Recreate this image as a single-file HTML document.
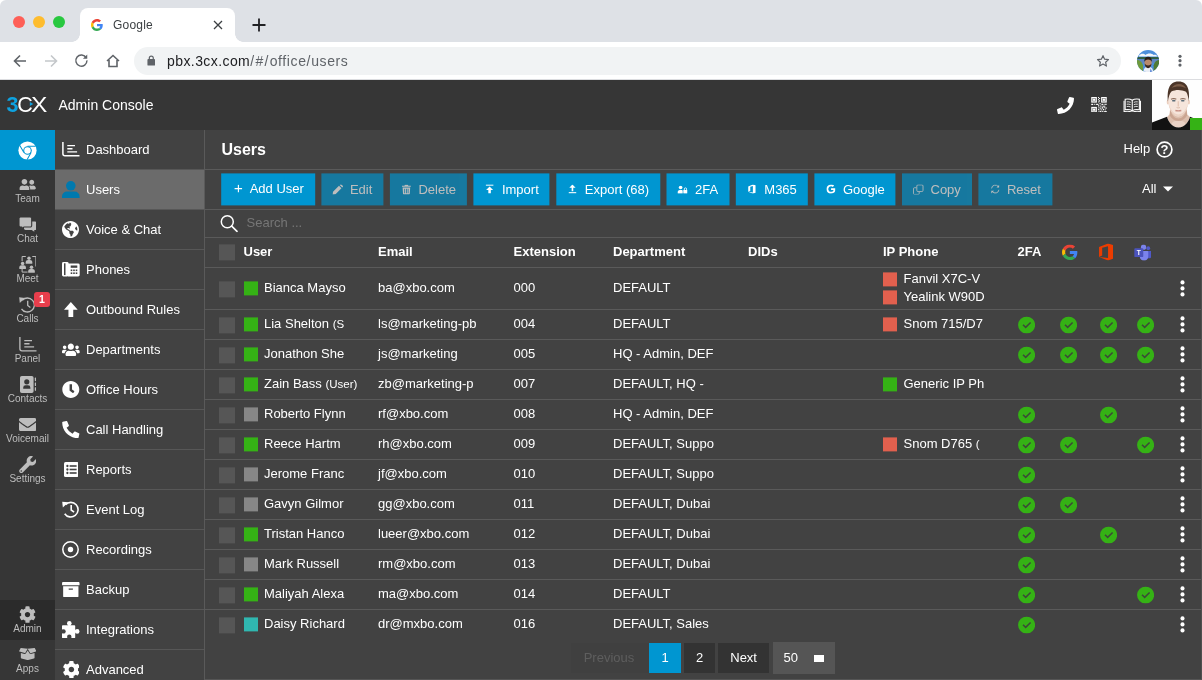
<!DOCTYPE html>
<html lang="en"><head><meta charset="utf-8"><title>Users - 3CX Admin Console</title>
<style>
*{box-sizing:border-box;margin:0;padding:0}
html,body{width:1202px;height:680px;overflow:hidden}
body{font-family:"Liberation Sans",sans-serif;background:#424242;color:#fff;position:relative;font-size:13px;line-height:1}
svg{display:block}
i{font-style:normal}
/* browser chrome */
.tabbar{position:absolute;left:0;top:0;width:1202px;height:42px;background:#dee1e6;border-radius:6px 6px 0 0}
.tabbg{position:absolute;left:0;top:0;width:1202px;height:10px;background:#fff}
.tl{position:absolute;top:15.5px;width:12px;height:12px;border-radius:50%}
.tab{position:absolute;left:80px;top:8px;width:155px;height:34px;background:#fff;border-radius:8px 8px 0 0}
.tab .curveL,.tab .curveR{position:absolute;bottom:0;width:8px;height:8px;background:radial-gradient(circle at 0 0,#dee1e6 7.5px,#fff 8px)}
.tab .curveL{left:-8px}
.tab .curveR{right:-8px;background:radial-gradient(circle at 100% 0,#dee1e6 7.5px,#fff 8px)}
.tabtitle{position:absolute;left:33px;top:11px;font-size:12px;color:#3c4043;letter-spacing:.2px}
.toolbar{position:absolute;left:0;top:42px;width:1202px;height:38px;background:#fff;border-bottom:1px solid #dcdde0}
.toolbar svg,.tabbar svg{position:absolute}
.pill{position:absolute;left:134px;top:5px;width:987px;height:28px;border-radius:14px;background:#f1f3f4}
.url{position:absolute;left:33px;top:7px;font-size:14px;color:#5f6368;letter-spacing:.620px;white-space:nowrap}
.url u{text-decoration:none;letter-spacing:1.300px}
.url b{font-weight:normal;color:#202124;letter-spacing:.42px}
/* app header */
.apphead{position:absolute;left:0;top:80px;width:1202px;height:50px;background:#363636}
.apphead svg{position:absolute}
.apptitle{position:absolute;left:58.5px;top:18px;font-size:14px;color:#fff}
.avatar{position:absolute;left:1152px;top:0;width:50px;height:50px;background:#fff;overflow:hidden}
.presence{position:absolute;right:0;bottom:0;width:12px;height:12px;background:#35b215}
/* sidebar */
.side{position:absolute;left:0;top:130px;width:55px;height:550px;background:#363636}
.sideblue{position:absolute;left:0;top:0;width:55px;height:40px;background:#0096d1}
.sideblue svg{position:absolute;left:18px;top:10.500px}
.sitem{position:absolute;left:0;width:55px;height:40px;color:#bdbdbd;text-align:center}
.sitem.active{background:#2b2b2b}
.sitem svg{position:absolute}
.sitem span{position:absolute;left:0;width:55px;top:23.5px;font-size:10px}
.badge{position:absolute;left:34px;top:2px;width:16px;height:14.5px;border-radius:3px;background:#e83e4c;color:#fff;font-size:10.5px;font-weight:bold;font-style:normal;line-height:15px;text-align:center}
/* menu */
.menu{position:absolute;left:55px;top:130px;width:149px;height:550px;background:#424242}
.mitem{position:relative;height:40px;border-bottom:1px solid #575757}
.mitem.active{background:#6b6b6b}
.mitem svg{position:absolute}
.mitem span{position:absolute;left:31px;top:13px;font-size:13px;color:#fff;white-space:nowrap}
/* main */
.main{position:absolute;left:205px;top:130px;width:997px;height:550px;background:#424242;border-left:0}
.main:before{content:"";position:absolute;left:-1px;top:0;width:1px;height:550px;background:#5a5a5a}
.title{position:absolute;left:16.5px;top:12px;font-size:16px;font-weight:bold}
.help{position:absolute;left:918.5px;top:12px;font-size:13px}
.help svg{position:absolute;left:32.300px;top:-1.500px}
.hl{position:absolute;left:0;width:997px;height:1px;background:#5a5a5a}
.btn{position:absolute;top:43.5px;height:32px;background:#0096d1;color:#fff;font-size:13px;white-space:nowrap}
.btn.dis{opacity:.65}
.btn svg{position:absolute;left:12px;top:10px}
.btn span{position:absolute;left:28.5px;top:9px}
.allsel{position:absolute;left:937px;top:52.5px;font-size:13px}
.caret{position:absolute;left:20.800px;top:4.500px;border:5px solid transparent;border-top-color:#fff;border-bottom:0}
.search{position:absolute;left:0;top:80px;height:27px;width:997px}
.search svg{position:absolute;left:15.100px;top:5px}
.search span{position:absolute;left:41.600px;top:7px;color:#767676;font-size:13px}
.row{position:absolute;left:0;width:997px}
.row .c{position:absolute;top:50%;margin-top:-7px;white-space:nowrap;font-size:13px;line-height:14px}
.row.head .c{font-weight:bold}
.row small{font-size:11.5px}
.cb{position:absolute;left:14.400px;top:50%;margin-top:-7px;width:16px;height:16px;background:#565656}
.row.head .cb{margin-top:-7.500px}
.sq{position:absolute;top:50%;margin-top:-6.200px;width:14px;height:14px}
.sq.g{background:#35b215}.sq.x{background:#878787}.sq.t{background:#30b7b0}.sq.r{background:#e2604e}
.row svg{position:absolute}
.pg{position:absolute;top:513px;height:30px;background:#333;color:#fff;font-size:13px;text-align:center;line-height:30px}
.pg.cur{background:#0096d1}
.pg.prev{background:#404040;color:#5e5e5e;text-indent:-2px}
.pgsz{position:absolute;left:567.5px;top:512px;width:62.75px;height:32px;background:#555}
.pgsz span{position:absolute;left:11px;top:9px;font-size:13px}
.pgsz i{position:absolute;left:41.5px;top:13px;width:10px;height:6.5px;background:#fff}
.redge{position:absolute;left:996px;top:0;width:1px;height:550px;background:#505050}
.logo{position:absolute;left:6.500px;top:13px;font-size:21.500px;letter-spacing:-1.300px;color:#fff;line-height:24px;white-space:nowrap}
.logo b{color:#0ea2e0;font-weight:bold}
.logo .lc,.logo .lx{font-weight:normal}
.logo .lx{position:relative;display:inline-block;transform:scaleX(1.140);transform-origin:0 0;margin-left:-.700px}
.logo .lx i{position:absolute;left:-1.500px;top:9px;border:2.500px solid transparent;border-left:3px solid #0ea2e0;border-right:0}
#app{position:absolute;left:0;top:0;width:1202px;height:680px}
.tabbar,.toolbar,.apphead,.side,.menu,.main{will-change:transform}
.row,.search,.btn,.allsel{transform:translateY(-.6px)}
.bedge{position:absolute;left:0;top:549px;width:997px;height:1px;background:#555}
.btn span{top:10px}
.btn.first span{top:9px}
.btn.dis svg{margin-top:.600px}

</style></head>
<body>
<div id="app">

<div class="tabbg"></div>
<div class="tabbar">
  <span class="tl" style="left:13px;background:#fe5f57"></span>
  <span class="tl" style="left:33px;background:#febc2e"></span>
  <span class="tl" style="left:53px;background:#28c840"></span>
  <div class="tab"><i class="curveL"></i><i class="curveR"></i><svg width="12" height="12" viewBox="0 0 48 48" fill="none" style="position:absolute;left:10.500px;top:11px"><path fill="#EA4335" d="M24 9.500c3.540 0 6.710 1.220 9.210 3.600l6.850-6.850C35.900 2.380 30.470 0 24 0 14.620 0 6.510 5.380 2.560 13.220l7.980 6.190C12.430 13.720 17.740 9.500 24 9.500z"/><path fill="#4285F4" d="M46.980 24.550c0-1.570-.15-3.090-.38-4.550H24v9.020h12.940c-.58 2.960-2.260 5.480-4.780 7.180l7.730 6c4.510-4.180 7.090-10.360 7.090-17.650z"/><path fill="#FBBC05" d="M10.530 28.590c-.48-1.450-.76-2.990-.76-4.590s.27-3.140.76-4.590l-7.980-6.190C.92 16.460 0 20.120 0 24c0 3.880.92 7.540 2.560 10.780l7.970-6.190z"/><path fill="#34A853" d="M24 48c6.480 0 11.930-2.130 15.890-5.810l-7.730-6c-2.150 1.450-4.920 2.300-8.160 2.300-6.260 0-11.570-4.220-13.470-9.910l-7.980 6.190C6.510 42.620 14.620 48 24 48z"/></svg><span class="tabtitle">Google</span><svg width="10" height="10" viewBox="0 0 10 10" fill="currentColor" style="left:133px;top:12px"><path d="M1 1l8 8M9 1l-8 8" stroke="#3c4043" stroke-width="1.3" fill="none"/></svg></div>
  <svg width="14" height="14" viewBox="0 0 14 14" fill="currentColor" style="left:251.500px;top:17.500px"><path d="M7 0.500v13M0.500 7h13" stroke="#202124" stroke-width="1.8" fill="none"/></svg>
</div>
<div class="toolbar">
  <svg width="16" height="16" viewBox="0 0 16 16" fill="currentColor" style="left:11.500px;top:11px"><path d="M14 8H2.500M8 2.500L2.500 8 8 13.500" stroke="#5f6368" stroke-width="1.6" fill="none"/></svg><svg width="16" height="16" viewBox="0 0 16 16" fill="currentColor" style="left:43px;top:11px"><path d="M2 8h11.500M8 2.500L13.500 8 8 13.500" stroke="#c4c7ca" stroke-width="1.600" fill="none"/></svg><svg width="14.8" height="14.8" viewBox="0 0 16 16" fill="currentColor" style="left:74.400px;top:11.400px"><path d="M13.200 5.200A6 6 0 1 0 14 8" stroke="#5f6368" stroke-width="1.600" fill="none"/><path d="M14.300 1.500v4.600H9.700z" fill="#5f6368"/></svg><svg width="16" height="16" viewBox="0 0 16 16" fill="currentColor" style="left:105px;top:11px"><path d="M2 8L8 2.500 14 8M4 7v6.500h8V7" stroke="#5f6368" stroke-width="1.600" fill="none"/></svg>
  <div class="pill"><svg width="8.6" height="10.8" viewBox="0 0 10 12" fill="currentColor" style="position:absolute;left:12.800px;top:8px"><rect x="0.500" y="4.500" width="9" height="7.500" rx="1" fill="#5f6368"/><path d="M2.700 5V3.300a2.300 2.300 0 0 1 4.600 0V5" stroke="#5f6368" stroke-width="1.400" fill="none"/></svg><span class="url"><b>pbx.3cx.com</b><u>/#/</u>office/users</span><svg width="14" height="14" viewBox="0 0 24 24" fill="currentColor" style="position:absolute;left:962px;top:7px"><path d="M12 2.800l2.800 6.100 6.600.7-4.900 4.500 1.400 6.600L12 17.300l-5.900 3.400 1.400-6.600-4.900-4.500 6.600-.7z" stroke="#5f6368" stroke-width="2" fill="none" stroke-linejoin="round"/></svg></div>
  <svg width="22.2" height="22.2" viewBox="0 0 22 22" fill="currentColor" style="left:1136.800px;top:7.800px"><defs><clipPath id="cav"><circle cx="11" cy="11" r="11"/></clipPath></defs><g clip-path="url(#cav)"><rect width="22" height="22" fill="#4d8fdc"/><path d="M2 5.500c2-2.500 5-2 6.500-.5 2-2 6-2 8 0 1.500-.5 3 0 4 1.500H2z" fill="#f3f6fa"/><rect y="7" width="22" height="2.500" fill="#2f5f43"/><rect y="9" width="22" height="4" fill="#5d86c4"/><path d="M0 10c3 0 5 2 6 5v7H0z" fill="#6f9a3c"/><path d="M22 10c-3 .5-4.500 2-5.500 5v7H22z" fill="#4f7a34"/><path d="M6.500 22c0-4 1.500-5.500 4.500-5.500s5 1.500 5 5.500z" fill="#e9eef6"/><path d="M13.500 18l1.500 4h-2z" fill="#3f6fd0"/><ellipse cx="11" cy="12.800" rx="3.600" ry="4.600" fill="#b98a6c"/><path d="M7.300 12c-.3-3.500 1.200-5.300 3.700-5.300s4 1.800 3.700 5.300c-.5-1.800-1.700-2.600-3.700-2.600S7.800 10.200 7.300 12z" fill="#2a1d17"/><path d="M7.600 13.500c.3 3 1.600 4.600 3.400 4.600s3.100-1.600 3.400-4.600c-.8 1.300-2 1.800-3.400 1.800s-2.600-.5-3.400-1.800z" fill="#3a2a22"/></g></svg>
  <svg width="4" height="14" viewBox="0 0 4 14" fill="currentColor" style="left:1178.100px;top:12.400px"><circle cx="2" cy="2.300" r="1.600" fill="#5f6368"/><circle cx="2" cy="6.700" r="1.600" fill="#5f6368"/><circle cx="2" cy="11.100" r="1.600" fill="#5f6368"/></svg>
</div>

<div class="apphead">
  <span class="logo"><b>3</b><span class="lc">C</span><span class="lx">X<i></i></span></span>
  <span class="apptitle">Admin Console</span>
  <svg width="17" height="17" viewBox="0 0 512 512" fill="#fff" style="left:1057px;top:16.500px"><path d="M493.400 24.600l-104-24c-11.300-2.600-22.900 3.300-27.500 13.900l-48 112c-4.200 9.800-1.400 21.300 6.900 28l60.600 49.600c-36 76.700-98.900 140.500-177.200 177.200l-49.600-60.600c-6.800-8.300-18.200-11.100-28-6.900l-112 48C3.900 366.500-2 378.100.6 389.400l24 104C27.100 504.200 36.700 512 48 512c256.100 0 464-207.500 464-464 0-11.200-7.700-20.900-18.600-23.400z"/></svg><svg width="16" height="15.5" viewBox="0 0 16 16" fill="currentColor" style="left:1091px;top:16.750px"><rect x="0" y="0" width="5.800" height="5.800" fill="#fff"/><rect x="1.5" y="1.5" width="2.800" height="2.800" fill="none" stroke="#8a8a8a" stroke-width=".8"/><rect x="10.2" y="0" width="5.800" height="5.800" fill="#fff"/><rect x="11.7" y="1.5" width="2.800" height="2.800" fill="none" stroke="#8a8a8a" stroke-width=".8"/><rect x="0" y="10.2" width="5.800" height="5.800" fill="#fff"/><rect x="1.5" y="11.7" width="2.800" height="2.800" fill="none" stroke="#8a8a8a" stroke-width=".8"/><rect x="7" y="0" width="1" height="1.2" fill="#fff"/><rect x="8" y="1" width="1.2" height="1" fill="#fff"/><rect x="7" y="2.2" width="1" height="1.2" fill="#fff"/><rect x="8" y="3.4" width="1" height="1.2" fill="#fff"/><rect x="7" y="4.6" width="1.4" height="1" fill="#fff"/><rect x="0" y="7" width="2" height="1.3" fill="#fff"/><rect x="3" y="7" width="1.2" height="1" fill="#fff"/><rect x="5" y="7" width="2.5" height="1.2" fill="#fff"/><rect x="8.5" y="6.3" width="1.2" height="1.2" fill="#fff"/><rect x="10.5" y="7" width="2" height="1.2" fill="#fff"/><rect x="13.5" y="7" width="2.5" height="1" fill="#fff"/><rect x="7" y="8.5" width="1.3" height="1.3" fill="#fff"/><rect x="9.3" y="8.8" width="1.2" height="1.2" fill="#fff"/><rect x="11.5" y="9" width="3" height="1" fill="#fff"/><rect x="7.5" y="10.5" width="1" height="1.3" fill="#fff"/><rect x="9" y="11" width="1.3" height="1" fill="#fff"/><rect x="10.8" y="10.5" width="1.5" height="1.5" fill="#fff"/><rect x="13" y="10.5" width="1" height="1" fill="#fff"/><rect x="14.5" y="10.8" width="1.5" height="1.2" fill="#fff"/><rect x="7" y="12.3" width="1.3" height="1" fill="#fff"/><rect x="9.5" y="12.8" width="1.5" height="1" fill="#fff"/><rect x="12" y="12.3" width="1.3" height="1.3" fill="#fff"/><rect x="14" y="12.8" width="1" height="1" fill="#fff"/><rect x="7.5" y="14" width="1" height="1.5" fill="#fff"/><rect x="9" y="14.5" width="1.5" height="1" fill="#fff"/><rect x="11.3" y="14.2" width="1.2" height="1.3" fill="#fff"/><rect x="13.3" y="14.5" width="2.7" height="1" fill="#fff"/></svg><svg width="18.5" height="14.75" viewBox="0 0 19 16" fill="currentColor" style="left:1122.750px;top:17.500px"><path d="M9.500 2.500C7.500 1 4.500 .800 1.800 1.300v11.500c2.700-.5 5.700-.3 7.700 1.200 2-1.500 5-1.700 7.700-1.200V1.300C14.500.800 11.500 1 9.500 2.500zM9.500 2.500V14" fill="none" stroke="#fff" stroke-width="1.200"/><path d="M.600 3v11.800c3-.6 6.300-.4 8.900.700 2.600-1.100 5.900-1.300 8.900-.700V3" fill="none" stroke="#fff" stroke-width="1.100"/><path d="M3.500 4.200c1.500-.2 3-.1 4.300.5M3.500 6.700c1.500-.2 3-.1 4.300.5M3.500 9.200c1.500-.2 3-.1 4.300.5M15.500 4.200c-1.500-.2-3-.1-4.300.5M15.500 6.700c-1.500-.2-3-.1-4.300.5M15.500 9.200c-1.500-.2-3-.1-4.300.5" fill="none" stroke="#fff" stroke-width=".9"/></svg>
  <div class="avatar"><svg width="50" height="50" viewBox="0 0 50 50" fill="currentColor"><rect width="50" height="50" fill="#fefefe"/><path d="M18.300 27H34.500L35.300 34.500 38 37c-1 4-5 10.600-11.500 10.600S16 41 15 37l2.500-2.500z" fill="#ddbfae"/><ellipse cx="26.500" cy="44" rx="7" ry="3.600" fill="#ead2c5"/><path d="M18.300 30c1.500 5 4.500 8.500 8.100 8.500s6.600-3.500 8.100-8.500l.6 5.500c-2 3.500-5 5.500-8.700 5.500s-6.700-2-8.700-5.500z" fill="#cba592"/><path d="M0 50V42.400L15 36.800C16 41 20 47.600 26.500 47.600S37 41 38 36.800L50 41.500V50z" fill="#121212"/><ellipse cx="15.900" cy="22" rx="1.200" ry="2.600" fill="#ecd0c0"/><ellipse cx="36.800" cy="22" rx="1.200" ry="2.600" fill="#ecd0c0"/><path d="M16.200 17C16.200 8 20 3 26.300 3S36.400 8 36.400 17c0 5-.6 9-2.100 12.500-1.500 3.500-4.500 7-8 7s-6.500-3.500-8-7c-1.500-3.500-2.100-7.500-2.100-12.500z" fill="#f6e5db"/><path d="M16.400 22c.2 3 .8 5.500 1.900 7.500 1.500 3.500 4.500 7 8 7s6.500-3.500 8-7c1.100-2 1.700-4.500 1.900-7.500-.7 3.500-1.700 6-3 7.800-1.800 2.800-4.300 4.700-6.900 4.700s-5.100-1.900-6.900-4.700c-1.300-1.800-2.300-4.300-3-7.800z" fill="#ecd3c5"/><path d="M15.900 21.500C15.200 12 16 1.600 26.500 1.600S37.700 12 36.800 21.500c-.4-4-1.200-7.700-2.800-9.800-2.500-1.100-5-1.800-7.700-1.800s-4.600.5-6.900 1.500c-1.900 2-2.900 6-3.500 10.100z" fill="#4b3528"/><path d="M19.500 8c2-2.800 4.500-4 7.500-4s5.300 1.300 7 4.300c-2.200-1.300-4.500-1.800-7.200-1.800S21.800 7 19.500 8z" fill="#7b5c47"/><ellipse cx="21.800" cy="20.700" rx="1.800" ry=".85" fill="#5c6d78"/><ellipse cx="30.800" cy="20.700" rx="1.800" ry=".85" fill="#5c6d78"/><path d="M19 19.300c1.700-.9 3.700-.9 5.300-.1M28.300 19.200c1.600-.8 3.600-.8 5.300.1" stroke="#8b6a58" stroke-width="1.100" fill="none"/><path d="M26.300 21.200v5.300" stroke="#e6c9b8" stroke-width="1.400" fill="none"/><path d="M24.600 27.500c1.100.5 2.300.5 3.400 0" stroke="#d9b4a1" stroke-width=".9" fill="none"/><path d="M23.400 30.500c2 .5 3.900.5 5.900 0" stroke="#c88f84" stroke-width="1.300" fill="none"/></svg><i class="presence"></i></div>
</div>
<div class="side"><div class="sideblue"><svg width="19" height="19" viewBox="0 0 20 20" fill="currentColor"><circle cx="10" cy="10" r="9.600" fill="#fff"/><circle cx="10" cy="10" r="4.500" fill="#0096d1"/><circle cx="10" cy="10" r="3.400" fill="#fff"/><path d="M10 5.600h8.600M6.200 12.200L1.900 4.700M13.800 12.200L9.500 19.700" stroke="#0096d1" stroke-width="1.100" fill="none"/></svg></div><div class="sitem" style="top:40px"><svg width="17.4" height="11.4" viewBox="0 32 640 448" fill="currentColor" style="left:18.8px;top:8.8px"><path d="M192 256c61.900 0 112-50.100 112-112S253.900 32 192 32 80 82.100 80 144s50.100 112 112 112zm76.800 32h-8.300c-20.800 10-43.900 16-68.500 16s-47.600-6-68.500-16h-8.300C51.600 288 0 339.600 0 403.200V432c0 26.500 21.500 48 48 48h288c26.500 0 48-21.500 48-48v-28.800c0-63.600-51.600-115.200-115.200-115.200zM480 256c53 0 96-43 96-96s-43-96-96-96-96 43-96 96 43 96 96 96zm48 32h-3.800c-13.900 4.800-28.600 8-44.200 8s-30.300-3.200-44.200-8H432c-20.400 0-39.200 5.900-55.700 15.400 24.400 26.300 39.700 61.200 39.700 99.800v38.400c0 2.200-.5 4.300-.6 6.400H592c26.500 0 48-21.500 48-48 0-61.900-50.100-112-112-112z"/></svg><span>Team</span></div><div class="sitem" style="top:80px"><svg width="17.4" height="14.8" viewBox="0 0 17.4 14.8" fill="currentColor" style="left:18.800px;top:7px"><path d="M6.500 4.500h9.400a1.500 1.500 0 0 1 1.500 1.500v5.500a1.500 1.500 0 0 1-1.500 1.500H15.300v1.800L12.700 13H6.500A1.500 1.500 0 0 1 5 11.500V6a1.500 1.500 0 0 1 1.500-1.500z"/><path d="M1.500 0h9.700a1.500 1.500 0 0 1 1.500 1.500v7a1.500 1.500 0 0 1-1.500 1.500H5L2.700 11.800V10H1.500A1.500 1.500 0 0 1 0 8.500v-7A1.500 1.500 0 0 1 1.500 0z" stroke="#363636" stroke-width="1.100"/></svg><span>Chat</span></div><div class="sitem" style="top:120px"><svg width="17.4" height="17.1" viewBox="0 0 17.4 17.1" fill="currentColor" style="left:18.800px;top:5.900px"><path d="M3.100 5.200V.500h3.700M13.300.500h3.600v10M3.100 13v3.100h5.500" fill="none" stroke="currentColor" stroke-width="1"/><circle cx="10" cy="2.20" r="1.75"/><path d="M6.70 7.80v-1.500c0-1.500 1-2.300 2.300-2.300h2c1.300 0 2.300.800 2.300 2.300v1.500z"/><circle cx="3.6" cy="7.50" r="1.75"/><path d="M0.30 13.10v-1.500c0-1.500 1-2.300 2.300-2.300h2c1.300 0 2.300.800 2.300 2.300v1.500z"/><circle cx="12.5" cy="11.20" r="1.75"/><path d="M9.20 16.80v-1.500c0-1.500 1-2.300 2.300-2.300h2c1.300 0 2.300.800 2.300 2.300v1.500z"/></svg><span>Meet</span></div><div class="sitem" style="top:160px"><svg width="16.5" height="16" viewBox="0 0 16.5 16" fill="currentColor" style="left:18.800px;top:6.500px"><path d="M3.300 3.200A7 7 0 1 1 2.500 11.800" fill="none" stroke="currentColor" stroke-width="1.300"/><path d="M.200 .300L6 .900 .800 6.100z"/><path d="M8.700 3.800v4.600l2.700 2" fill="none" stroke="currentColor" stroke-width="1.300"/></svg><span>Calls</span><em class="badge">1</em></div><div class="sitem" style="top:200px"><svg width="17.6" height="15" viewBox="0 0 17.6 15" fill="currentColor" style="left:19px;top:7px"><path d="M.900 0v11.800a2 2 0 0 0 2 2H17.500" fill="none" stroke="currentColor" stroke-width="1.3"/><path d="M5.300 3.700h7.700M5.300 6.750h5.200M5.300 9.800h9.800" fill="none" stroke="currentColor" stroke-width="1.3"/></svg><span>Panel</span></div><div class="sitem" style="top:240px"><svg width="16.2" height="17" viewBox="0 0 16.200 17" fill="currentColor" style="left:20px;top:6px"><path fill-rule="evenodd" d="M1.800 0h10a1.800 1.800 0 0 1 1.800 1.800v13.400a1.800 1.800 0 0 1-1.800 1.800h-10A1.800 1.800 0 0 1 0 15.200V1.800A1.800 1.800 0 0 1 1.800 0zM6.800 3.200a2.600 2.600 0 1 0 0 5.200 2.600 2.600 0 0 0 0-5.200zM3.200 12.700h7.200v-1a2.400 2.400 0 0 0-2.400-2.400H5.600a2.400 2.400 0 0 0-2.400 2.400z"/><rect x="14.800" y="1.600" width="1.400" height="3.600" rx=".6"/><rect x="14.800" y="6.400" width="1.400" height="3.600" rx=".6"/><rect x="14.800" y="11.200" width="1.400" height="3.600" rx=".6"/></svg><span>Contacts</span></div><div class="sitem" style="top:280px"><svg width="17.4" height="13.2" viewBox="0 64 512 384" fill="currentColor" style="left:18.8px;top:8px"><path d="M502.300 190.800c3.900-3.100 9.700-.2 9.700 4.700V400c0 26.500-21.500 48-48 48H48c-26.500 0-48-21.500-48-48V195.600c0-5 5.700-7.800 9.700-4.700 22.400 17.400 52.100 39.500 154.100 113.600 21.100 15.400 56.700 47.800 92.200 47.600 35.700.3 72-32.800 92.300-47.600 102-74.100 131.600-96.300 154-113.700zM256 320c23.200.4 56.600-29.200 73.400-41.400 132.700-96.300 142.800-104.700 173.400-128.700 5.800-4.500 9.200-11.500 9.200-18.900v-19c0-26.500-21.500-48-48-48H48C21.500 64 0 85.500 0 112v19c0 7.400 3.400 14.300 9.200 18.900 30.600 23.900 40.700 32.400 173.400 128.700 16.800 12.200 50.200 41.800 73.400 41.400z"/></svg><span>Voicemail</span></div><div class="sitem" style="top:320px"><svg width="17.4" height="17.1" viewBox="0 0 512 512" fill="currentColor" style="left:18.8px;top:5.9px"><path d="M507.730 109.100c-2.240-9.030-13.540-12.090-20.120-5.510l-74.360 74.360-67.880-11.310-11.310-67.880 74.360-74.360c6.620-6.620 3.430-17.900-5.660-20.160-47.380-11.740-99.550.91-136.580 37.930-39.640 39.640-50.550 97.100-34.050 147.200L18.740 402.760c-24.990 24.990-24.990 65.510 0 90.500 24.990 24.990 65.510 24.990 90.500 0l213.210-213.210c50.120 16.710 107.470 5.680 147.370-34.220 37.070-37.070 49.700-89.320 37.910-136.730zM64 472c-13.250 0-24-10.750-24-24 0-13.260 10.750-24 24-24s24 10.740 24 24c0 13.250-10.750 24-24 24z"/></svg><span>Settings</span></div><div class="sitem active" style="top:470px"><svg width="17" height="17.2" viewBox="0 0 512 512" fill="currentColor" style="left:19.0px;top:5.9px"><path d="M487.400 315.700l-42.600-24.600c4.300-23.200 4.300-47 0-70.200l42.600-24.600c4.900-2.800 7.100-8.600 5.500-14-11.100-35.600-30-67.800-54.700-94.600-3.800-4.100-10-5.100-14.800-2.300L380.800 110c-17.900-15.400-38.500-27.300-60.800-35.100V25.800c0-5.600-3.900-10.500-9.400-11.700-36.700-8.200-74.300-7.800-109.200 0-5.500 1.200-9.400 6.100-9.400 11.700V75c-22.200 7.900-42.800 19.800-60.800 35.100L88.700 85.500c-4.900-2.800-11-1.900-14.800 2.300-24.700 26.700-43.600 58.900-54.700 94.600-1.700 5.400.6 11.200 5.500 14L67.300 221c-4.300 23.200-4.300 47 0 70.200l-42.600 24.600c-4.900 2.800-7.100 8.600-5.500 14 11.100 35.600 30 67.800 54.700 94.600 3.800 4.100 10 5.100 14.800 2.300l42.600-24.600c17.900 15.400 38.500 27.300 60.800 35.100v49.200c0 5.600 3.900 10.500 9.400 11.700 36.700 8.200 74.300 7.800 109.200 0 5.500-1.200 9.400-6.100 9.400-11.700v-49.200c22.200-7.900 42.800-19.800 60.800-35.100l42.600 24.600c4.900 2.800 11 1.900 14.800-2.300 24.700-26.700 43.600-58.900 54.700-94.600 1.500-5.500-.7-11.300-5.600-14.100zM256 336c-44.100 0-80-35.900-80-80s35.900-80 80-80 80 35.900 80 80-35.900 80-80 80z"/></svg><span>Admin</span></div><div class="sitem" style="top:510px"><svg width="17.4" height="12" viewBox="0 32 640 448" fill="currentColor" style="left:18.8px;top:8.3px"><path d="M425.700 256c-16.900 0-32.800-9-41.400-23.400L320 126l-64.200 106.600c-8.700 14.500-24.600 23.500-41.500 23.500-4.500 0-9-.6-13.300-1.900L64 215v178c0 14.700 10 27.500 24.200 31l216.200 54.100c10.200 2.500 20.900 2.500 31 0L551.800 424c14.200-3.600 24.200-16.400 24.200-31V215l-137 39.100c-4.300 1.300-8.800 1.900-13.300 1.900zm212.600-112.200L586.800 41c-3.100-6.200-9.800-9.800-16.700-8.900L320 64l91.700 152.100c3.800 6.300 11.400 9.300 18.500 7.300l197.900-56.500c9.900-2.900 14.700-13.900 10.200-23.100zM53.200 41L1.700 143.800c-4.600 9.200.3 20.200 10.100 23l197.900 56.500c7.100 2 14.700-1 18.500-7.300L320 64 69.800 32.100c-6.900-.8-13.500 2.700-16.600 8.900z"/></svg><span>Apps</span></div></div>
<div class="menu"><div class="mitem"><svg width="17.6" height="15" viewBox="0 0 17.6 15" fill="currentColor" style="left:7px;top:12px"><path d="M.900 0v11.800a2 2 0 0 0 2 2H17.500" fill="none" stroke="#fff" stroke-width="1.5"/><path d="M5.300 3.700h7.700M5.300 6.750h5.200M5.300 9.800h9.800" fill="none" stroke="#fff" stroke-width="1.3"/></svg><span>Dashboard</span></div><div class="mitem active"><svg width="17.6" height="17.2" viewBox="0 0 17.6 17.2" fill="#0079ae" style="left:7.200px;top:10.800px"><circle cx="8.800" cy="4.800" r="4.800"/><path d="M0 17.200v-1.700a5 5 0 0 1 5-5h7.600a5 5 0 0 1 5 5v1.700z"/></svg><span>Users</span></div><div class="mitem"><svg width="17" height="17.1" viewBox="0 8 496 496" fill="#fff" style="left:7.4px;top:10.9px"><path d="M248 8C111.030 8 0 119.030 0 256s111.030 248 248 248 248-111.030 248-248S384.970 8 248 8zm82.290 357.600c-3.900 3.880-7.990 7.950-11.310 11.280-2.990 3-5.100 6.700-6.170 10.710-1.510 5.660-2.730 11.380-4.770 16.870l-17.390 46.850c-13.760 3-28 4.690-42.650 4.690v-27.380c1.690-12.620-7.640-36.260-22.630-51.250-6-6-9.370-14.140-9.370-22.630v-32.010c0-11.640-6.270-22.340-16.460-27.970-14.370-7.950-34.810-19.060-48.810-26.110-11.480-5.780-22.100-13.140-31.650-21.750l-.8-.72a114.792 114.792 0 0 1-18.060-20.740c-9.380-13.770-24.660-36.420-34.590-51.140 20.470-45.500 57.360-82.040 103.200-101.890l24.010 12.010C203.480 89.740 216 82.010 216 70.110v-11.300c7.990-1.290 16.120-2.110 24.390-2.420l28.300 28.300c6.250 6.250 6.250 16.380 0 22.630L264 112l-10.340 10.340c-3.120 3.120-3.120 8.190 0 11.310l4.690 4.690c3.120 3.120 3.120 8.190 0 11.310l-8 8a8.008 8.008 0 0 1-5.660 2.340h-8.990c-2.080 0-4.080.81-5.580 2.270l-9.920 9.650a8.008 8.008 0 0 0-1.580 9.310l15.590 31.190c2.660 5.320-1.210 11.580-7.150 11.580h-5.640c-1.930 0-3.790-.7-5.240-1.960l-9.280-8.060a16.017 16.017 0 0 0-15.550-3.100l-31.170 10.390a11.950 11.950 0 0 0-8.170 11.340c0 4.530 2.560 8.660 6.610 10.690l11.080 5.540c9.410 4.710 19.790 7.160 30.310 7.160s22.590 27.290 32 32h66.750c8.490 0 16.620 3.370 22.630 9.370l13.690 13.690a30.503 30.503 0 0 1 8.930 21.570 46.536 46.536 0 0 1-13.720 32.980zM417 274.250c-5.790-1.450-10.840-5-14.150-9.970l-17.980-26.970a23.970 23.970 0 0 1 0-26.620l19.590-29.380c2.320-3.470 5.500-6.290 9.240-8.150l12.980-6.490C440.200 193.590 448 223.870 448 256c0 8.670-.74 17.160-1.820 25.540L417 274.250z"/></svg><span>Voice &amp; Chat</span></div><div class="mitem"><svg width="17.7" height="14.4" viewBox="0 0 17.700 14.400" fill="currentColor" style="left:7px;top:12.400px"><rect x="0" y="0" width="6.600" height="14.400" rx="1.500" fill="#fff"/><rect x="2" y="1.300" width="1.500" height="11.800" fill="#424242"/><path d="M6 1.400h10.200a1.500 1.500 0 0 1 1.500 1.500v10a1.500 1.500 0 0 1-1.500 1.500H6z" fill="#fff"/><rect x="8.700" y="3.500" width="6.600" height="2.300" fill="#424242"/><g fill="#424242"><rect x="8.700" y="7.500" width="1.600" height="1.600"/><rect x="11.200" y="7.500" width="1.600" height="1.600"/><rect x="13.700" y="7.500" width="1.600" height="1.600"/><rect x="8.700" y="10.400" width="1.600" height="1.600"/><rect x="11.200" y="10.400" width="1.600" height="1.600"/><rect x="13.700" y="10.400" width="1.600" height="1.600"/></g></svg><span>Phones</span></div><div class="mitem"><svg width="13.7" height="15" viewBox="0 0 13.700 15" fill="currentColor" style="left:9.200px;top:12px"><path d="M6.850 0L13.700 7.800H9.250V15H4.450V7.800H0z" fill="#fff"/></svg><span>Outbound Rules</span></div><div class="mitem"><svg width="17.7" height="13.6" viewBox="0 32 640 448" fill="#fff" style="left:7px;top:12.6px"><path d="M96 224c35.300 0 64-28.700 64-64s-28.700-64-64-64-64 28.700-64 64 28.700 64 64 64zm448 0c35.300 0 64-28.700 64-64s-28.700-64-64-64-64 28.700-64 64 28.700 64 64 64zm32 32h-64c-17.600 0-33.500 7.100-45.100 18.600 40.300 22.100 68.900 62 75.100 109.400h66c17.700 0 32-14.300 32-32v-32c0-35.300-28.700-64-64-64zm-256 0c61.900 0 112-50.100 112-112S381.900 32 320 32 208 82.100 208 144s50.100 112 112 112zm76.800 32h-8.300c-20.800 10-43.900 16-68.500 16s-47.600-6-68.500-16h-8.300C179.600 288 128 339.600 128 403.200V432c0 26.500 21.500 48 48 48h288c26.500 0 48-21.500 48-48v-28.800c0-63.600-51.600-115.200-115.200-115.200zm-223.700-13.400C161.500 263.100 145.600 256 128 256H64c-35.300 0-64 28.700-64 64v32c0 17.700 14.300 32 32 32h65.900c6.300-47.400 34.900-87.300 75.200-109.400z"/></svg><span>Departments</span></div><div class="mitem"><svg width="17.6" height="17" viewBox="8 8 496 496" fill="#fff" style="left:7px;top:11px"><path d="M256 8C119 8 8 119 8 256s111 248 248 248 248-111 248-248S393 8 256 8zm57.100 350.100L224.900 294c-3.100-2.300-4.900-5.900-4.900-9.700V116c0-6.600 5.400-12 12-12h48c6.600 0 12 5.400 12 12v137.700l63.500 46.200c5.400 3.900 6.500 11.400 2.600 16.800l-28.200 38.800c-3.900 5.300-11.400 6.500-16.800 2.600z"/></svg><span>Office Hours</span></div><div class="mitem"><svg width="17.6" height="17.2" viewBox="0 0 512 512" fill="#fff" style="left:7px;top:10.8px"><path d="M497.390 361.800l-112-48a24 24 0 0 0-28 6.900l-49.600 60.600A370.660 370.660 0 0 1 130.600 204.110l60.600-49.600a23.940 23.940 0 0 0 6.900-28l-48-112A24.160 24.160 0 0 0 122.600.61l-104 24A24 24 0 0 0 0 48c0 256.500 207.900 464 464 464a24 24 0 0 0 23.400-18.600l24-104a24.290 24.290 0 0 0-14.010-27.600z"/></svg><span>Call Handling</span></div><div class="mitem"><svg width="14.8" height="15" viewBox="0 0 14.800 15" fill="currentColor" style="left:8.500px;top:11.800px"><rect width="14.800" height="15" rx="1.600" fill="#fff"/><g fill="#424242"><circle cx="3.400" cy="4" r="1.150"/><circle cx="3.400" cy="7.500" r="1.150"/><circle cx="3.400" cy="11" r="1.150"/><rect x="5.600" y="3.200" width="7" height="1.600"/><rect x="5.600" y="6.700" width="7" height="1.600"/><rect x="5.600" y="10.200" width="7" height="1.600"/></g></svg><span>Reports</span></div><div class="mitem"><svg width="17.3" height="17" viewBox="0 0 17.300 17" fill="currentColor" style="left:7.400px;top:11px"><path d="M3.500 3.600A7.300 7.300 0 1 1 2.700 12.700" fill="none" stroke="#fff" stroke-width="1.600"/><path d="M.200 .700L6.200 1.200 .900 6.500z" fill="#fff"/><path d="M9.200 4v5l2.900 2.100" fill="none" stroke="#fff" stroke-width="1.600"/></svg><span>Event Log</span></div><div class="mitem"><svg width="17" height="17" viewBox="0 0 17 17" fill="currentColor" style="left:7.400px;top:11px"><circle cx="8.500" cy="8.500" r="7.700" fill="none" stroke="#fff" stroke-width="1.500"/><circle cx="8.500" cy="8.500" r="2.700" fill="#fff"/></svg><span>Recordings</span></div><div class="mitem"><svg width="17.6" height="15.3" viewBox="0 32 512 448" fill="#fff" style="left:7px;top:11.8px"><path d="M32 448c0 17.700 14.300 32 32 32h384c17.700 0 32-14.300 32-32V160H32v288zm160-212c0-6.600 5.400-12 12-12h104c6.600 0 12 5.400 12 12v8c0 6.600-5.400 12-12 12H204c-6.600 0-12-5.400-12-12v-8zM480 32H32C14.300 32 0 46.300 0 64v48c0 8.800 7.200 16 16 16h480c8.800 0 16-7.200 16-16V64c0-17.700-14.300-32-32-32z"/></svg><span>Backup</span></div><div class="mitem"><svg width="17.5" height="17.1" viewBox="0 0 17.500 17.100" fill="currentColor" style="left:7.300px;top:10.900px"><rect x="0" y="4.300" width="13.200" height="12.800" rx=".8" fill="#fff"/><rect x="6.200" y="3" width="2.200" height="2" fill="#fff"/><circle cx="7.300" cy="2.300" r="2.300" fill="#fff"/><rect x="12.500" y="9.300" width="2" height="2.200" fill="#fff"/><circle cx="15.200" cy="10.400" r="2.300" fill="#fff"/><circle cx="1.500" cy="10.400" r="2.200" fill="#424242"/><circle cx="7.300" cy="15.700" r="2.200" fill="#424242"/><rect x="0" y="9.600" width="1" height="1.600" fill="#424242"/><rect x="6.500" y="16" width="1.600" height="1.100" fill="#424242"/></svg><span>Integrations</span></div><div class="mitem"><svg width="16.8" height="17.2" viewBox="19 8 474 496" fill="#fff" style="left:7.7px;top:10.9px"><path d="M487.400 315.700l-42.600-24.600c4.300-23.200 4.300-47 0-70.200l42.600-24.600c4.900-2.800 7.100-8.600 5.500-14-11.100-35.600-30-67.800-54.700-94.600-3.800-4.100-10-5.100-14.800-2.300L380.800 110c-17.900-15.400-38.500-27.300-60.800-35.100V25.800c0-5.600-3.900-10.500-9.400-11.700-36.700-8.200-74.300-7.800-109.200 0-5.500 1.200-9.400 6.100-9.400 11.700V75c-22.200 7.900-42.800 19.800-60.800 35.100L88.700 85.500c-4.900-2.800-11-1.900-14.800 2.300-24.700 26.700-43.600 58.900-54.700 94.600-1.700 5.400.6 11.200 5.500 14L67.300 221c-4.300 23.200-4.300 47 0 70.200l-42.600 24.600c-4.900 2.800-7.100 8.600-5.500 14 11.100 35.600 30 67.800 54.700 94.600 3.800 4.100 10 5.100 14.800 2.300l42.600-24.600c17.900 15.400 38.500 27.300 60.800 35.100v49.200c0 5.600 3.900 10.500 9.400 11.700 36.700 8.200 74.300 7.800 109.200 0 5.500-1.200 9.400-6.100 9.400-11.700v-49.200c22.200-7.900 42.800-19.800 60.800-35.100l42.600 24.600c4.900 2.800 11 1.900 14.800-2.300 24.700-26.700 43.600-58.900 54.700-94.600 1.500-5.500-.7-11.300-5.600-14.100zM256 336c-44.100 0-80-35.900-80-80s35.900-80 80-80 80 35.900 80 80-35.900 80-80 80z"/></svg><span>Advanced</span></div></div>
<div class="main"><div class="title">Users</div><div class="help">Help<svg width="17" height="17" viewBox="0 0 17 17" fill="currentColor"><circle cx="8.500" cy="8.500" r="7.400" fill="none" stroke="#fff" stroke-width="1.700"/><text x="8.500" y="13" font-size="13" font-weight="bold" text-anchor="middle" fill="#fff" font-family="Liberation Sans,sans-serif">?</text></svg></div><div class="hl" style="top:39px"></div><div class="btn first" style="left:16px;width:94px;transform:translate(0.2px,-.6px)"><svg width="8.4" height="8.4" viewBox="0 0 9 9" fill="currentColor" style="left:12.7px;top:11.5px"><path d="M4.500 0.300v8.400M0.300 4.500h8.400" stroke="currentColor" stroke-width="1.200" fill="none"/></svg><span>Add User</span></div><div class="btn dis" style="left:116px;width:62px;transform:translate(0.4px,-.6px)"><svg width="10.3" height="10.5" viewBox="0 0 10 10" fill="currentColor" style="left:11.3px;top:10.6px"><path d="M0 10l.600-3L6.400 1.200l2.400 2.400L3 9.400zM7.100.500l.5-.5a.800.800 0 0 1 1.100 0l1.300 1.300a.800.800 0 0 1 0 1.100l-.5.500z"/></svg><span>Edit</span></div><div class="btn dis" style="left:184px;width:77px;transform:translate(0.9px,-.6px)"><svg width="9" height="10.2" viewBox="0 0 9 10" fill="currentColor" style="left:11.8px;top:10.7px"><path d="M0 1.200h2.600L3 .300h3l.400.900H9v1H0zM.700 3h7.600l-.4 6.200a.900.900 0 0 1-.9.800H2a.900.900 0 0 1-.9-.8zm1.700 1.200v4.500h.800V4.200zm1.700 0v4.500h.800V4.200zm1.700 0v4.500h.800V4.200z" fill-rule="evenodd"/></svg><span>Delete</span></div><div class="btn" style="left:268px;width:76px;transform:translate(0.4px,-.6px)"><svg width="8.4" height="9" viewBox="0 0 9 10" fill="currentColor" style="left:12.2px;top:11.5px"><rect x=".3" y="0" width="8.400" height="1.400"/><path d="M4.500 2.300L8.400 6.200H5.900V10H3.100V6.200H.600z"/></svg><span>Import</span></div><div class="btn" style="left:351px;width:104px;transform:translate(0.3px,-.6px)"><svg width="8.3" height="9" viewBox="0 0 9 10" fill="currentColor" style="left:12.4px;top:11.5px"><rect x=".3" y="8.600" width="8.400" height="1.400"/><path d="M4.500 0L8 3.700H5.400v3.800H3.600V3.700H1z"/></svg><span>Export (68)</span></div><div class="btn" style="left:461px;width:63px;transform:translate(0.5px,-.6px)"><svg width="10" height="8.3" viewBox="0 0 11 9" fill="currentColor" style="left:11.2px;top:12.5px"><circle cx="3.400" cy="2.200" r="2"/><path d="M0 9V7.500C0 6 1.200 5 2.600 5h1.600C5.300 5 5.700 5.500 5.700 6v3z"/><rect x="6.400" y="5" width="4.600" height="4" rx=".5"/><path d="M7.500 5V3.900a1.250 1.250 0 0 1 2.500 0V5" stroke="currentColor" stroke-width=".9" fill="none"/></svg><span>2FA</span></div><div class="btn" style="left:530px;width:72px;transform:translate(0.8px,-.6px)"><svg width="8.3" height="9.3" viewBox="0 0 8 10" fill="currentColor" style="left:12px;top:11.5px"><path d="M0 2.200L5 0l3 .900v8.200L5 10 0 7.900 5 8.600V1.700L2.200 2.600v4.600L0 7.900z"/></svg><span>M365</span></div><div class="btn" style="left:609px;width:81px;transform:translate(0.4px,-.6px)"><svg width="9.3" height="9.3" viewBox="0 0 48 48" fill="currentColor" style="left:11.700px;top:11.400px"><path d="M46.980 24.550c0-1.570-.15-3.090-.38-4.550H24v9.020h12.940c-.58 2.960-2.260 5.480-4.780 7.180-2.150 1.450-4.920 2.300-8.160 2.300-6.260 0-11.570-4.220-13.470-9.910-.48-1.450-.76-2.990-.76-4.590s.27-3.140.76-4.590C12.430 13.720 17.740 9.500 24 9.500c3.540 0 6.710 1.220 9.210 3.600l6.850-6.850C35.900 2.380 30.470 0 24 0 14.620 0 6.510 5.380 2.560 13.220.92 16.460 0 20.120 0 24c0 3.880.92 7.540 2.560 10.780C6.510 42.620 14.620 48 24 48c6.480 0 11.930-2.130 15.890-5.810 4.510-4.180 7.090-10.360 7.090-17.650z"/></svg><span>Google</span></div><div class="btn dis" style="left:697px;width:70px;transform:translate(0px,-.6px)"><svg width="10.5" height="10.5" viewBox="0 0 11 11" fill="currentColor" style="left:11.3px;top:10.7px"><rect x="4" y=".5" width="6.500" height="7" rx="1.200" fill="none" stroke="currentColor" stroke-width=".85"/><path d="M3.500 3.500h-2a1 1 0 0 0-1 1v5a1 1 0 0 0 1 1h4a1 1 0 0 0 1-1V8" fill="none" stroke="currentColor" stroke-width=".85"/></svg><span>Copy</span></div><div class="btn dis" style="left:773px;width:74px;transform:translate(0.4px,-.6px)"><svg width="9.8" height="9.3" viewBox="0 0 10 10" fill="currentColor" style="left:11.6px;top:11.4px"><path d="M1 4.300A4 4 0 0 1 8.300 2.500M9 5.700A4 4 0 0 1 1.700 7.500" fill="none" stroke="currentColor" stroke-width=".95"/><path d="M9.300 .3v3H6.300zM.700 9.700v-3H3.700z"/></svg><span>Reset</span></div><div class="allsel">All<i class="caret"></i></div><div class="hl" style="top:79px"></div><div class="search"><svg width="18" height="18" viewBox="0 0 18 18" fill="currentColor"><circle cx="7.300" cy="7.300" r="6" fill="none" stroke="#fff" stroke-width="1.500"/><path d="M11.700 11.700L17 17" stroke="#fff" stroke-width="1.600" stroke-linecap="round"/></svg><span>Search ...</span></div><div class="hl" style="top:107px"></div><div class="row head" style="top:108px;height:29px"><i class="cb"></i><span class="c" style="left:38.5px">User</span><span class="c" style="left:173px">Email</span><span class="c" style="left:308.5px">Extension</span><span class="c" style="left:408px">Department</span><span class="c" style="left:543px">DIDs</span><span class="c" style="left:678px">IP Phone</span><span class="c" style="left:812.5px">2FA</span><svg width="15.7" height="15.7" viewBox="0 0 48 48" fill="none" style="position:absolute;left:857px;top:7.100px"><path fill="#EA4335" d="M24 9.500c3.540 0 6.710 1.220 9.210 3.600l6.850-6.850C35.900 2.380 30.470 0 24 0 14.620 0 6.510 5.380 2.560 13.220l7.980 6.190C12.430 13.720 17.740 9.500 24 9.500z"/><path fill="#4285F4" d="M46.980 24.550c0-1.570-.15-3.090-.38-4.550H24v9.020h12.940c-.58 2.960-2.260 5.480-4.780 7.180l7.730 6c4.510-4.180 7.090-10.360 7.090-17.650z"/><path fill="#FBBC05" d="M10.530 28.590c-.48-1.450-.76-2.990-.76-4.590s.27-3.140.76-4.590l-7.980-6.190C.92 16.460 0 20.120 0 24c0 3.880.92 7.540 2.560 10.780l7.970-6.190z"/><path fill="#34A853" d="M24 48c6.480 0 11.930-2.130 15.890-5.810l-7.730-6c-2.150 1.450-4.920 2.300-8.160 2.300-6.260 0-11.570-4.220-13.470-9.910l-7.980 6.190C6.510 42.620 14.620 48 24 48z"/></svg><svg width="14.3" height="17" viewBox="0 0 15 18" fill="currentColor" style="position:absolute;left:893.700px;top:6.300px"><path d="M0 14.300V3.700L9.500 0 15 1.700v14.600L9.500 18 0 14.300l9.500 1.200V3L3.300 4.500v8.300z" fill="#eb3c00"/></svg><svg width="17.6" height="16" viewBox="0 0 18 17" fill="currentColor" style="position:absolute;left:928.600px;top:7.200px"><circle cx="14.800" cy="4" r="2" fill="#5059c9"/><path d="M12.500 7h5a.7.700 0 0 1 .7.700V12a2.800 2.800 0 0 1-5.600 0z" fill="#5059c9"/><circle cx="9.800" cy="3" r="2.800" fill="#7b83eb"/><path d="M5.500 7h8.500a.800.800 0 0 1 .8.800v5a4.500 4.500 0 0 1-9 0z" fill="#7b83eb"/><rect x="0" y="4" width="9.500" height="9.500" rx="1" fill="#4b53bc"/><text x="4.750" y="11.300" font-size="7" font-weight="bold" text-anchor="middle" fill="#fff" font-family="Liberation Sans,sans-serif">T</text></svg></div><div class="hl" style="top:137px"></div><div class="row" style="top:138px;height:41px"><i class="cb"></i><i class="sq g" style="left:38.5px"></i><span class="c" style="left:59px">Bianca Mayso</span><span class="c" style="left:173px">ba@xbo.com</span><span class="c" style="left:308.5px">000</span><span class="c" style="left:408px">DEFAULT</span><i class="sq r" style="left:678px;top:4.5px;margin:0"></i><span class="c" style="left:698.5px;top:11.5px">Fanvil X7C-V</span><i class="sq r" style="left:678px;top:23.0px;margin:0"></i><span class="c" style="left:698.5px;top:30.0px">Yealink W90D</span><svg width="5" height="18" viewBox="0 0 5 18" fill="currentColor" style="left:975px;top:50%;margin-top:-8.300px"><circle cx="2.500" cy="3" r="2.050" fill="#fff"/><circle cx="2.500" cy="9" r="2.050" fill="#fff"/><circle cx="2.500" cy="15" r="2.050" fill="#fff"/></svg></div><div class="hl" style="top:179px"></div><div class="row" style="top:180px;height:29px"><i class="cb"></i><i class="sq g" style="left:38.5px"></i><span class="c" style="left:59px">Lia Shelton <small>(S</small></span><span class="c" style="left:173px">ls@marketing-pb</span><span class="c" style="left:308.5px">004</span><span class="c" style="left:408px">DEFAULT</span><i class="sq r" style="left:678px"></i><span class="c" style="left:698.5px">Snom 715/D7</span><svg width="17.2" height="17.2" viewBox="-8.600 -8.600 17.200 17.200" fill="currentColor" style="left:812.9px;top:50%;margin-top:-7.900px"><circle cx="0" cy="0" r="8.550" fill="#35b215"/><path d="M-3.600 -.300l2.700 2.700 4.900-4.900" fill="none" stroke="#3b4a37" stroke-width="1.500"/></svg><svg width="17.2" height="17.2" viewBox="-8.600 -8.600 17.200 17.200" fill="currentColor" style="left:854.9px;top:50%;margin-top:-7.900px"><circle cx="0" cy="0" r="8.550" fill="#35b215"/><path d="M-3.600 -.300l2.700 2.700 4.900-4.900" fill="none" stroke="#3b4a37" stroke-width="1.500"/></svg><svg width="17.2" height="17.2" viewBox="-8.600 -8.600 17.200 17.200" fill="currentColor" style="left:894.9px;top:50%;margin-top:-7.900px"><circle cx="0" cy="0" r="8.550" fill="#35b215"/><path d="M-3.600 -.300l2.700 2.700 4.900-4.900" fill="none" stroke="#3b4a37" stroke-width="1.500"/></svg><svg width="17.2" height="17.2" viewBox="-8.600 -8.600 17.200 17.200" fill="currentColor" style="left:931.9px;top:50%;margin-top:-7.900px"><circle cx="0" cy="0" r="8.550" fill="#35b215"/><path d="M-3.600 -.300l2.700 2.700 4.900-4.900" fill="none" stroke="#3b4a37" stroke-width="1.500"/></svg><svg width="5" height="18" viewBox="0 0 5 18" fill="currentColor" style="left:975px;top:50%;margin-top:-8.300px"><circle cx="2.500" cy="3" r="2.050" fill="#fff"/><circle cx="2.500" cy="9" r="2.050" fill="#fff"/><circle cx="2.500" cy="15" r="2.050" fill="#fff"/></svg></div><div class="hl" style="top:209px"></div><div class="row" style="top:210px;height:29px"><i class="cb"></i><i class="sq g" style="left:38.5px"></i><span class="c" style="left:59px">Jonathon She</span><span class="c" style="left:173px">js@marketing</span><span class="c" style="left:308.5px">005</span><span class="c" style="left:408px">HQ - Admin, DEF</span><svg width="17.2" height="17.2" viewBox="-8.600 -8.600 17.200 17.200" fill="currentColor" style="left:812.9px;top:50%;margin-top:-7.900px"><circle cx="0" cy="0" r="8.550" fill="#35b215"/><path d="M-3.600 -.300l2.700 2.700 4.900-4.900" fill="none" stroke="#3b4a37" stroke-width="1.500"/></svg><svg width="17.2" height="17.2" viewBox="-8.600 -8.600 17.200 17.200" fill="currentColor" style="left:854.9px;top:50%;margin-top:-7.900px"><circle cx="0" cy="0" r="8.550" fill="#35b215"/><path d="M-3.600 -.300l2.700 2.700 4.900-4.900" fill="none" stroke="#3b4a37" stroke-width="1.500"/></svg><svg width="17.2" height="17.2" viewBox="-8.600 -8.600 17.200 17.200" fill="currentColor" style="left:894.9px;top:50%;margin-top:-7.900px"><circle cx="0" cy="0" r="8.550" fill="#35b215"/><path d="M-3.600 -.300l2.700 2.700 4.900-4.900" fill="none" stroke="#3b4a37" stroke-width="1.500"/></svg><svg width="17.2" height="17.2" viewBox="-8.600 -8.600 17.200 17.200" fill="currentColor" style="left:931.9px;top:50%;margin-top:-7.900px"><circle cx="0" cy="0" r="8.550" fill="#35b215"/><path d="M-3.600 -.300l2.700 2.700 4.900-4.900" fill="none" stroke="#3b4a37" stroke-width="1.500"/></svg><svg width="5" height="18" viewBox="0 0 5 18" fill="currentColor" style="left:975px;top:50%;margin-top:-8.300px"><circle cx="2.500" cy="3" r="2.050" fill="#fff"/><circle cx="2.500" cy="9" r="2.050" fill="#fff"/><circle cx="2.500" cy="15" r="2.050" fill="#fff"/></svg></div><div class="hl" style="top:239px"></div><div class="row" style="top:240px;height:29px"><i class="cb"></i><i class="sq g" style="left:38.5px"></i><span class="c" style="left:59px">Zain Bass <small>(User)</small></span><span class="c" style="left:173px">zb@marketing-p</span><span class="c" style="left:308.5px">007</span><span class="c" style="left:408px">DEFAULT, HQ -</span><i class="sq g" style="left:678px"></i><span class="c" style="left:698.5px">Generic IP Ph</span><svg width="5" height="18" viewBox="0 0 5 18" fill="currentColor" style="left:975px;top:50%;margin-top:-8.300px"><circle cx="2.500" cy="3" r="2.050" fill="#fff"/><circle cx="2.500" cy="9" r="2.050" fill="#fff"/><circle cx="2.500" cy="15" r="2.050" fill="#fff"/></svg></div><div class="hl" style="top:269px"></div><div class="row" style="top:270px;height:29px"><i class="cb"></i><i class="sq x" style="left:38.5px"></i><span class="c" style="left:59px">Roberto Flynn</span><span class="c" style="left:173px">rf@xbo.com</span><span class="c" style="left:308.5px">008</span><span class="c" style="left:408px">HQ - Admin, DEF</span><svg width="17.2" height="17.2" viewBox="-8.600 -8.600 17.200 17.200" fill="currentColor" style="left:812.9px;top:50%;margin-top:-7.900px"><circle cx="0" cy="0" r="8.550" fill="#35b215"/><path d="M-3.600 -.300l2.700 2.700 4.900-4.900" fill="none" stroke="#3b4a37" stroke-width="1.500"/></svg><svg width="17.2" height="17.2" viewBox="-8.600 -8.600 17.200 17.200" fill="currentColor" style="left:894.9px;top:50%;margin-top:-7.900px"><circle cx="0" cy="0" r="8.550" fill="#35b215"/><path d="M-3.600 -.300l2.700 2.700 4.900-4.900" fill="none" stroke="#3b4a37" stroke-width="1.500"/></svg><svg width="5" height="18" viewBox="0 0 5 18" fill="currentColor" style="left:975px;top:50%;margin-top:-8.300px"><circle cx="2.500" cy="3" r="2.050" fill="#fff"/><circle cx="2.500" cy="9" r="2.050" fill="#fff"/><circle cx="2.500" cy="15" r="2.050" fill="#fff"/></svg></div><div class="hl" style="top:299px"></div><div class="row" style="top:300px;height:29px"><i class="cb"></i><i class="sq g" style="left:38.5px"></i><span class="c" style="left:59px">Reece Hartm</span><span class="c" style="left:173px">rh@xbo.com</span><span class="c" style="left:308.5px">009</span><span class="c" style="left:408px">DEFAULT, Suppo</span><i class="sq r" style="left:678px"></i><span class="c" style="left:698.5px">Snom D765 <small>(</small></span><svg width="17.2" height="17.2" viewBox="-8.600 -8.600 17.200 17.200" fill="currentColor" style="left:812.9px;top:50%;margin-top:-7.900px"><circle cx="0" cy="0" r="8.550" fill="#35b215"/><path d="M-3.600 -.300l2.700 2.700 4.900-4.900" fill="none" stroke="#3b4a37" stroke-width="1.500"/></svg><svg width="17.2" height="17.2" viewBox="-8.600 -8.600 17.200 17.200" fill="currentColor" style="left:854.9px;top:50%;margin-top:-7.900px"><circle cx="0" cy="0" r="8.550" fill="#35b215"/><path d="M-3.600 -.300l2.700 2.700 4.900-4.900" fill="none" stroke="#3b4a37" stroke-width="1.500"/></svg><svg width="17.2" height="17.2" viewBox="-8.600 -8.600 17.200 17.200" fill="currentColor" style="left:931.9px;top:50%;margin-top:-7.900px"><circle cx="0" cy="0" r="8.550" fill="#35b215"/><path d="M-3.600 -.300l2.700 2.700 4.900-4.900" fill="none" stroke="#3b4a37" stroke-width="1.500"/></svg><svg width="5" height="18" viewBox="0 0 5 18" fill="currentColor" style="left:975px;top:50%;margin-top:-8.300px"><circle cx="2.500" cy="3" r="2.050" fill="#fff"/><circle cx="2.500" cy="9" r="2.050" fill="#fff"/><circle cx="2.500" cy="15" r="2.050" fill="#fff"/></svg></div><div class="hl" style="top:329px"></div><div class="row" style="top:330px;height:29px"><i class="cb"></i><i class="sq x" style="left:38.5px"></i><span class="c" style="left:59px">Jerome Franc</span><span class="c" style="left:173px">jf@xbo.com</span><span class="c" style="left:308.5px">010</span><span class="c" style="left:408px">DEFAULT, Suppo</span><svg width="17.2" height="17.2" viewBox="-8.600 -8.600 17.200 17.200" fill="currentColor" style="left:812.9px;top:50%;margin-top:-7.900px"><circle cx="0" cy="0" r="8.550" fill="#35b215"/><path d="M-3.600 -.300l2.700 2.700 4.900-4.900" fill="none" stroke="#3b4a37" stroke-width="1.500"/></svg><svg width="5" height="18" viewBox="0 0 5 18" fill="currentColor" style="left:975px;top:50%;margin-top:-8.300px"><circle cx="2.500" cy="3" r="2.050" fill="#fff"/><circle cx="2.500" cy="9" r="2.050" fill="#fff"/><circle cx="2.500" cy="15" r="2.050" fill="#fff"/></svg></div><div class="hl" style="top:359px"></div><div class="row" style="top:360px;height:29px"><i class="cb"></i><i class="sq x" style="left:38.5px"></i><span class="c" style="left:59px">Gavyn Gilmor</span><span class="c" style="left:173px">gg@xbo.com</span><span class="c" style="left:308.5px">011</span><span class="c" style="left:408px">DEFAULT, Dubai</span><svg width="17.2" height="17.2" viewBox="-8.600 -8.600 17.200 17.200" fill="currentColor" style="left:812.9px;top:50%;margin-top:-7.900px"><circle cx="0" cy="0" r="8.550" fill="#35b215"/><path d="M-3.600 -.300l2.700 2.700 4.900-4.900" fill="none" stroke="#3b4a37" stroke-width="1.500"/></svg><svg width="17.2" height="17.2" viewBox="-8.600 -8.600 17.200 17.200" fill="currentColor" style="left:854.9px;top:50%;margin-top:-7.900px"><circle cx="0" cy="0" r="8.550" fill="#35b215"/><path d="M-3.600 -.300l2.700 2.700 4.900-4.900" fill="none" stroke="#3b4a37" stroke-width="1.500"/></svg><svg width="5" height="18" viewBox="0 0 5 18" fill="currentColor" style="left:975px;top:50%;margin-top:-8.300px"><circle cx="2.500" cy="3" r="2.050" fill="#fff"/><circle cx="2.500" cy="9" r="2.050" fill="#fff"/><circle cx="2.500" cy="15" r="2.050" fill="#fff"/></svg></div><div class="hl" style="top:389px"></div><div class="row" style="top:390px;height:29px"><i class="cb"></i><i class="sq g" style="left:38.5px"></i><span class="c" style="left:59px">Tristan Hanco</span><span class="c" style="left:173px">lueer@xbo.com</span><span class="c" style="left:308.5px">012</span><span class="c" style="left:408px">DEFAULT, Dubai</span><svg width="17.2" height="17.2" viewBox="-8.600 -8.600 17.200 17.200" fill="currentColor" style="left:812.9px;top:50%;margin-top:-7.900px"><circle cx="0" cy="0" r="8.550" fill="#35b215"/><path d="M-3.600 -.300l2.700 2.700 4.900-4.900" fill="none" stroke="#3b4a37" stroke-width="1.500"/></svg><svg width="17.2" height="17.2" viewBox="-8.600 -8.600 17.200 17.200" fill="currentColor" style="left:894.9px;top:50%;margin-top:-7.900px"><circle cx="0" cy="0" r="8.550" fill="#35b215"/><path d="M-3.600 -.300l2.700 2.700 4.900-4.900" fill="none" stroke="#3b4a37" stroke-width="1.500"/></svg><svg width="5" height="18" viewBox="0 0 5 18" fill="currentColor" style="left:975px;top:50%;margin-top:-8.300px"><circle cx="2.500" cy="3" r="2.050" fill="#fff"/><circle cx="2.500" cy="9" r="2.050" fill="#fff"/><circle cx="2.500" cy="15" r="2.050" fill="#fff"/></svg></div><div class="hl" style="top:419px"></div><div class="row" style="top:420px;height:29px"><i class="cb"></i><i class="sq x" style="left:38.5px"></i><span class="c" style="left:59px">Mark Russell</span><span class="c" style="left:173px">rm@xbo.com</span><span class="c" style="left:308.5px">013</span><span class="c" style="left:408px">DEFAULT, Dubai</span><svg width="17.2" height="17.2" viewBox="-8.600 -8.600 17.200 17.200" fill="currentColor" style="left:812.9px;top:50%;margin-top:-7.900px"><circle cx="0" cy="0" r="8.550" fill="#35b215"/><path d="M-3.600 -.300l2.700 2.700 4.900-4.900" fill="none" stroke="#3b4a37" stroke-width="1.500"/></svg><svg width="5" height="18" viewBox="0 0 5 18" fill="currentColor" style="left:975px;top:50%;margin-top:-8.300px"><circle cx="2.500" cy="3" r="2.050" fill="#fff"/><circle cx="2.500" cy="9" r="2.050" fill="#fff"/><circle cx="2.500" cy="15" r="2.050" fill="#fff"/></svg></div><div class="hl" style="top:449px"></div><div class="row" style="top:450px;height:29px"><i class="cb"></i><i class="sq g" style="left:38.5px"></i><span class="c" style="left:59px">Maliyah Alexa</span><span class="c" style="left:173px">ma@xbo.com</span><span class="c" style="left:308.5px">014</span><span class="c" style="left:408px">DEFAULT</span><svg width="17.2" height="17.2" viewBox="-8.600 -8.600 17.200 17.200" fill="currentColor" style="left:812.9px;top:50%;margin-top:-7.900px"><circle cx="0" cy="0" r="8.550" fill="#35b215"/><path d="M-3.600 -.300l2.700 2.700 4.900-4.900" fill="none" stroke="#3b4a37" stroke-width="1.500"/></svg><svg width="17.2" height="17.2" viewBox="-8.600 -8.600 17.200 17.200" fill="currentColor" style="left:931.9px;top:50%;margin-top:-7.900px"><circle cx="0" cy="0" r="8.550" fill="#35b215"/><path d="M-3.600 -.300l2.700 2.700 4.900-4.900" fill="none" stroke="#3b4a37" stroke-width="1.500"/></svg><svg width="5" height="18" viewBox="0 0 5 18" fill="currentColor" style="left:975px;top:50%;margin-top:-8.300px"><circle cx="2.500" cy="3" r="2.050" fill="#fff"/><circle cx="2.500" cy="9" r="2.050" fill="#fff"/><circle cx="2.500" cy="15" r="2.050" fill="#fff"/></svg></div><div class="hl" style="top:479px"></div><div class="row" style="top:480px;height:29px"><i class="cb"></i><i class="sq t" style="left:38.5px"></i><span class="c" style="left:59px">Daisy Richard</span><span class="c" style="left:173px">dr@mxbo.com</span><span class="c" style="left:308.5px">016</span><span class="c" style="left:408px">DEFAULT, Sales</span><svg width="17.2" height="17.2" viewBox="-8.600 -8.600 17.200 17.200" fill="currentColor" style="left:812.9px;top:50%;margin-top:-7.900px"><circle cx="0" cy="0" r="8.550" fill="#35b215"/><path d="M-3.600 -.300l2.700 2.700 4.900-4.900" fill="none" stroke="#3b4a37" stroke-width="1.500"/></svg><svg width="5" height="18" viewBox="0 0 5 18" fill="currentColor" style="left:975px;top:50%;margin-top:-8.300px"><circle cx="2.500" cy="3" r="2.050" fill="#fff"/><circle cx="2.500" cy="9" r="2.050" fill="#fff"/><circle cx="2.500" cy="15" r="2.050" fill="#fff"/></svg></div><div class="pg prev" style="left:366px;width:78px">Previous</div><div class="pg cur" style="left:444.25px;width:31.5px">1</div><div class="pg" style="left:479.25px;width:30.75px">2</div><div class="pg" style="left:513.25px;width:50.75px">Next</div><div class="pgsz"><span>50</span><i></i></div><div class="redge"></div><div class="bedge"></div></div>
</div>
</body></html>
